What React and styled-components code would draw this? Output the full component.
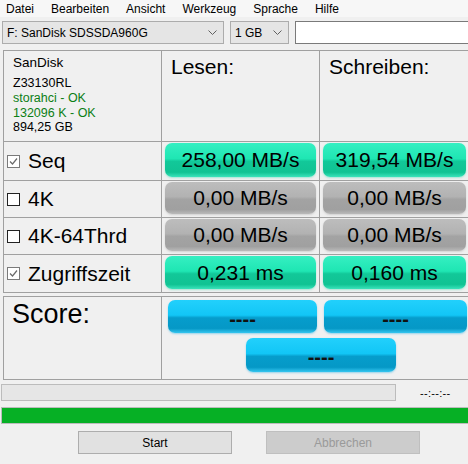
import React from 'react';
import styled, { createGlobalStyle, css } from 'styled-components';

const GlobalStyle = createGlobalStyle`
    html, body {
        margin:0;
        padding:0;
        background:#f0f0f0;
    }
    body {
        font-family:"Liberation Sans", Arial, sans-serif;
    }
`;

const Window = styled.div`
    width:468px;
    height:464px;
    overflow:hidden;
    background:#f0f0f0;
    color:#000;
`;

const MenuBar = styled.div`
    display:flex;
    align-items:center;
    gap:17px;
    height:17px;
    padding-left:6px;
    font-size:12px;
    background:#f7f7f7;
`;

const Toolbar = styled.div`
    display:flex;
    gap:6px;
    height:23px;
    margin-top:4px;
    padding-left:2px;
`;

const Combo = styled.div`
    display:flex;
    align-items:center;
    justify-content:space-between;
    box-sizing:border-box;
    width:${p => p.$width}px;
    flex-shrink:0;
    padding:0 6px 0 4px;
    background:#e5e5e5;
    border:1px solid #acacac;
    font-size:12px;
`;

const SearchBox = styled.div`
    flex:1;
    min-width:180px;
    background:#fff;
    border:1px solid #7a7a7a;
`;

const Grid = styled.div`
    display:grid;
    grid-template-columns:${p => p.$cols};
    grid-template-rows:${p => p.$rows};
    gap:1px;
    padding:1px;
    width:max-content;
    margin:${p => p.$top}px 0 0 3px;
    background:#a0a0a0;
`;

const Cell = styled.div`
    min-width:0;
    background:#f0f0f0;
`;

const InfoCell = styled(Cell)`
    padding:4px 0 0 9px;
    font-size:12.5px;
    line-height:14.8px;
`;

const DriveName = styled.div`
    font-size:13.5px;
    line-height:16px;
    margin-bottom:5px;
`;

const InfoLine = styled.div`
    color:${p => (p.$ok ? '#0c7f16' : '#000')};
`;

const HeadCell = styled(Cell)`
    padding:4px 0 0 9px;
    font-size:21px;
`;

const LabelCell = styled(Cell)`
    display:flex;
    align-items:center;
    gap:8px;
    padding-left:3px;
    font-size:21px;
`;

const ValueCell = styled(Cell)`
    padding:1px 3px 3px 3px;
`;

const tones = {
    green: css`
        background:linear-gradient(to bottom, #35efc2 0%, #1fe6b3 46%, #12c899 54%, #10c393 86%, #3be3bb 100%);
        box-shadow:0 1px 2px rgba(20, 210, 160, 0.35);
    `,
    gray: css`
        background:linear-gradient(to bottom, #bdbdbd 0%, #b2b2b2 46%, #a3a3a3 54%, #a0a0a0 86%, #bababa 100%);
        box-shadow:0 1px 2px rgba(150, 150, 150, 0.35);
    `,
    blue: css`
        background:linear-gradient(to bottom, #22d0fc 0%, #12c6f6 46%, #069dcc 54%, #0598c6 86%, #35c6f0 100%);
        box-shadow:0 1px 2px rgba(20, 170, 230, 0.4);
    `,
};

const Pill = styled.div`
    display:flex;
    align-items:center;
    justify-content:center;
    height:100%;
    box-sizing:border-box;
    border-radius:7px;
    font-size:21px;
    ${p => tones[p.$tone]}
`;

const ScoreLabel = styled(Cell)`
    padding:2px 0 0 8px;
    font-size:27px;
`;

const ScoreBoxes = styled(Cell)`
    display:grid;
    grid-template-columns:149px 143px;
    grid-template-rows:33px 34px;
    gap:5px 7px;
    padding:3px 0 0 6px;
`;

const ScorePill = styled(Pill)`
    padding-top:5px;
    font-size:20px;
    font-weight:bold;
    color:#111;
`;

const TotalPill = styled(ScorePill)`
    grid-column:1 / -1;
    width:150px;
    margin-left:78px;
`;

const ProgressRow = styled.div`
    display:flex;
    align-items:center;
    margin-top:4px;
    padding-left:1px;
`;

const Track = styled.div`
    box-sizing:border-box;
    width:${p => p.$width}px;
    height:17px;
    background:#e6e6e6;
    border:1px solid #bcbcbc;
`;

const Fill = styled.div`
    height:100%;
    background:#06b025;
`;

const TimeLabel = styled.div`
    margin-left:24px;
    font-size:11px;
    letter-spacing:0.3px;
`;

const FullTrack = styled(Track)`
    margin:6px 0 0 1px;
`;

const ButtonRow = styled.div`
    display:flex;
    gap:34px;
    margin-top:7px;
    padding-left:78px;
`;

const Button = styled.div`
    display:flex;
    align-items:center;
    justify-content:center;
    box-sizing:border-box;
    width:154px;
    height:23px;
    font-size:12px;
    background:${p => (p.$disabled ? '#cccccc' : '#e1e1e1')};
    border:1px solid ${p => (p.$disabled ? '#bfbfbf' : '#adadad')};
    color:${p => (p.$disabled ? '#9a9a9a' : '#000')};
`;

const Chevron = () => (
    <svg width="9" height="5" viewBox="0 0 9 5">
        <polyline points="0.5,0.5 4.5,4.5 8.5,0.5" fill="none" stroke="#606060" strokeWidth="1" />
    </svg>
);

const CheckBox = ({ checked }) => (
    <svg width="13" height="13" viewBox="0 0 13 13">
        <rect x="0.5" y="0.5" width="12" height="12" fill="#fff" stroke={checked ? '#7a7a7a' : '#222'} />
        {checked && (
            <polyline points="3,6.5 5.5,9 10,3.5" fill="none" stroke="#6a6a6a" strokeWidth="1.2" />
        )}
    </svg>
);

const menus = ['Datei', 'Bearbeiten', 'Ansicht', 'Werkzeug', 'Sprache', 'Hilfe'];

const tests = [
    { name: 'Seq', checked: true, read: '258,00 MB/s', write: '319,54 MB/s', tone: 'green' },
    { name: '4K', checked: false, read: '0,00 MB/s', write: '0,00 MB/s', tone: 'gray' },
    { name: '4K-64Thrd', checked: false, read: '0,00 MB/s', write: '0,00 MB/s', tone: 'gray' },
    { name: 'Zugriffszeit', checked: true, read: '0,231 ms', write: '0,160 ms', tone: 'green' },
];

const App = () => {
    return (
        <Window>
            <GlobalStyle />
            <MenuBar>
                {menus.map(m => <span key={m}>{m}</span>)}
            </MenuBar>
            <Toolbar>
                <Combo $width={222}>F: SanDisk SDSSDA960G<Chevron /></Combo>
                <Combo $width={59}>1 GB<Chevron /></Combo>
                <SearchBox />
            </Toolbar>

            <Grid $cols="157px 157px 149px" $rows="90px 38px 36px 36px 37px" $top={6}>
                <InfoCell>
                    <DriveName>SanDisk</DriveName>
                    <InfoLine>Z33130RL</InfoLine>
                    <InfoLine $ok>storahci - OK</InfoLine>
                    <InfoLine $ok>132096 K - OK</InfoLine>
                    <InfoLine>894,25 GB</InfoLine>
                </InfoCell>
                <HeadCell>Lesen:</HeadCell>
                <HeadCell>Schreiben:</HeadCell>
                {tests.map(t => (
                    <React.Fragment key={t.name}>
                        <LabelCell>
                            <CheckBox checked={t.checked} />
                            {t.name}
                        </LabelCell>
                        <ValueCell><Pill $tone={t.tone}>{t.read}</Pill></ValueCell>
                        <ValueCell><Pill $tone={t.tone}>{t.write}</Pill></ValueCell>
                    </React.Fragment>
                ))}
            </Grid>

            <Grid $cols="157px 307px" $rows="82px" $top={3}>
                <ScoreLabel>Score:</ScoreLabel>
                <ScoreBoxes>
                    <ScorePill $tone="blue">----</ScorePill>
                    <ScorePill $tone="blue">----</ScorePill>
                    <TotalPill $tone="blue">----</TotalPill>
                </ScoreBoxes>
            </Grid>

            <ProgressRow>
                <Track $width={395} />
                <TimeLabel>--:--:--</TimeLabel>
            </ProgressRow>
            <FullTrack $width={470}>
                <Fill style={{ width: '100%' }} />
            </FullTrack>
            <ButtonRow>
                <Button>Start</Button>
                <Button $disabled>Abbrechen</Button>
            </ButtonRow>
        </Window>
    );
};

export default App;
